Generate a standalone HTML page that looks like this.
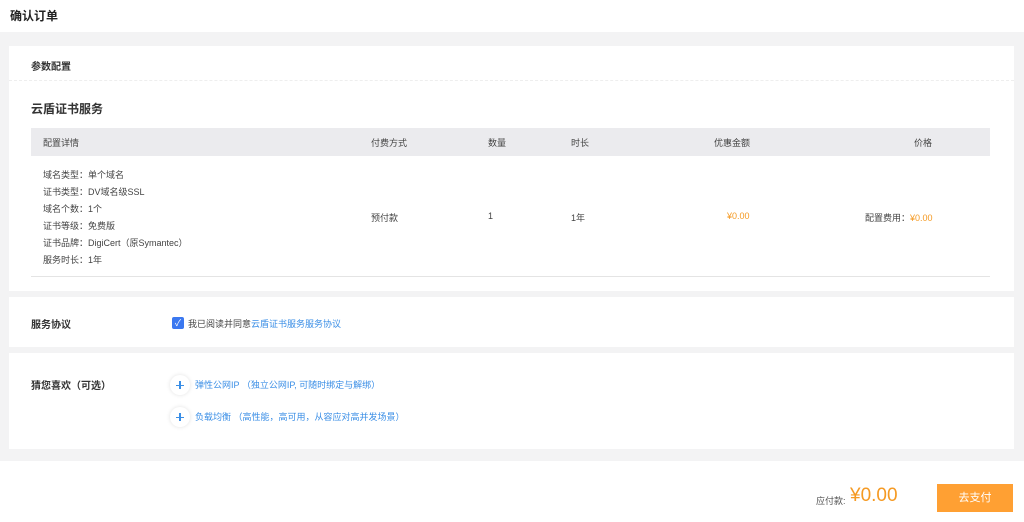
<!DOCTYPE html><html><head><meta charset="utf-8"><style>
*{margin:0;padding:0;box-sizing:border-box}
body{width:1024px;height:522px;overflow:hidden;background:#fff;font-family:"Liberation Sans","Noto Sans CJK SC",sans-serif;color:#333;position:relative}
.a{position:absolute;white-space:nowrap}
.bg{position:absolute;left:0;top:32px;width:1024px;height:429px;background:#f3f3f4}
.card{position:absolute;left:9px;width:1005px;background:#fff}
.s{font-size:9px;color:#444}
.blue{color:#3a8ee6}
.or{color:#f59a23}
.plus{position:absolute;width:20px;height:20px;border-radius:50%;background:#fff;box-shadow:0 0 4px rgba(0,0,0,.12)}
.plus:before{content:"";position:absolute;left:6px;top:9.5px;width:8px;height:1.3px;background:#3a8ee6}
.plus:after{content:"";position:absolute;left:9.4px;top:6px;width:1.3px;height:8px;background:#3a8ee6}
</style></head><body>
<div class="a" style="left:10px;top:7px;font-size:12px;font-weight:bold;color:#222">确认订单</div>
<div class="bg"></div>
<div class="card" style="top:46px;height:245px">
  <div class="a" style="left:22px;top:12px;font-size:10px;font-weight:bold">参数配置</div>
  <div class="a" style="left:0;top:34px;width:1005px;border-top:1px dashed #eee"></div>
  <div class="a" style="left:22px;top:54px;font-size:12px;font-weight:bold">云盾证书服务</div>
  <div class="a" style="left:22px;top:82px;width:959px;height:28px;background:#ebebee"></div>
  <div class="a s" style="left:34px;top:90px">配置详情</div>
  <div class="a s" style="left:362px;top:90px">付费方式</div>
  <div class="a s" style="left:479px;top:90px">数量</div>
  <div class="a s" style="left:562px;top:90px">时长</div>
  <div class="a s" style="left:705px;top:90px">优惠金额</div>
  <div class="a s" style="left:905px;top:90px">价格</div>
  <div class="a s" style="left:34px;top:121px;line-height:17px">域名类型：单个域名<br>证书类型：DV域名级SSL<br>域名个数：1个<br>证书等级：免费版<br>证书品牌：DigiCert（原Symantec）<br>服务时长：1年</div>
  <div class="a s" style="left:362px;top:165px">预付款</div>
  <div class="a s" style="left:479px;top:165px">1</div>
  <div class="a s" style="left:562px;top:165px">1年</div>
  <div class="a s or" style="left:718px;top:165px">¥0.00</div>
  <div class="a s" style="left:856px;top:165px">配置费用：<span class="or">¥0.00</span></div>
  <div class="a" style="left:22px;top:230px;width:959px;border-top:1px solid #e4e4e4"></div>
</div>
<div class="card" style="top:297px;height:50px">
  <div class="a" style="left:22px;top:19px;font-size:10px;font-weight:bold">服务协议</div>
  <div class="a" style="left:163px;top:20px;width:12px;height:12px;border-radius:2px;background:#3b78f0;color:#fff;font-size:9px;line-height:12px;text-align:center">✓</div>
  <div class="a s" style="left:179px;top:20px">我已阅读并同意<span class="blue">云盾证书服务服务协议</span></div>
</div>
<div class="card" style="top:353px;height:96px">
  <div class="a" style="left:22px;top:24px;font-size:10px;font-weight:bold">猜您喜欢（可选）</div>
  <div class="plus" style="left:161px;top:22px"></div>
  <div class="a s blue" style="left:186px;top:25px">弹性公网IP （独立公网IP, 可随时绑定与解绑）</div>
  <div class="plus" style="left:161px;top:54px"></div>
  <div class="a s blue" style="left:186px;top:57px">负载均衡 （高性能，高可用，从容应对高并发场景）</div>
</div>
<div class="a" style="left:816px;top:494px;font-size:9px;color:#555">应付款:</div>
<div class="a or" style="left:850px;top:485px;font-size:19px">¥0.00</div>
<div class="a" style="left:937px;top:484px;width:76px;height:28px;background:#ffa033;color:#fff;font-size:11px;line-height:28px;text-align:center">去支付</div>
</body></html>
